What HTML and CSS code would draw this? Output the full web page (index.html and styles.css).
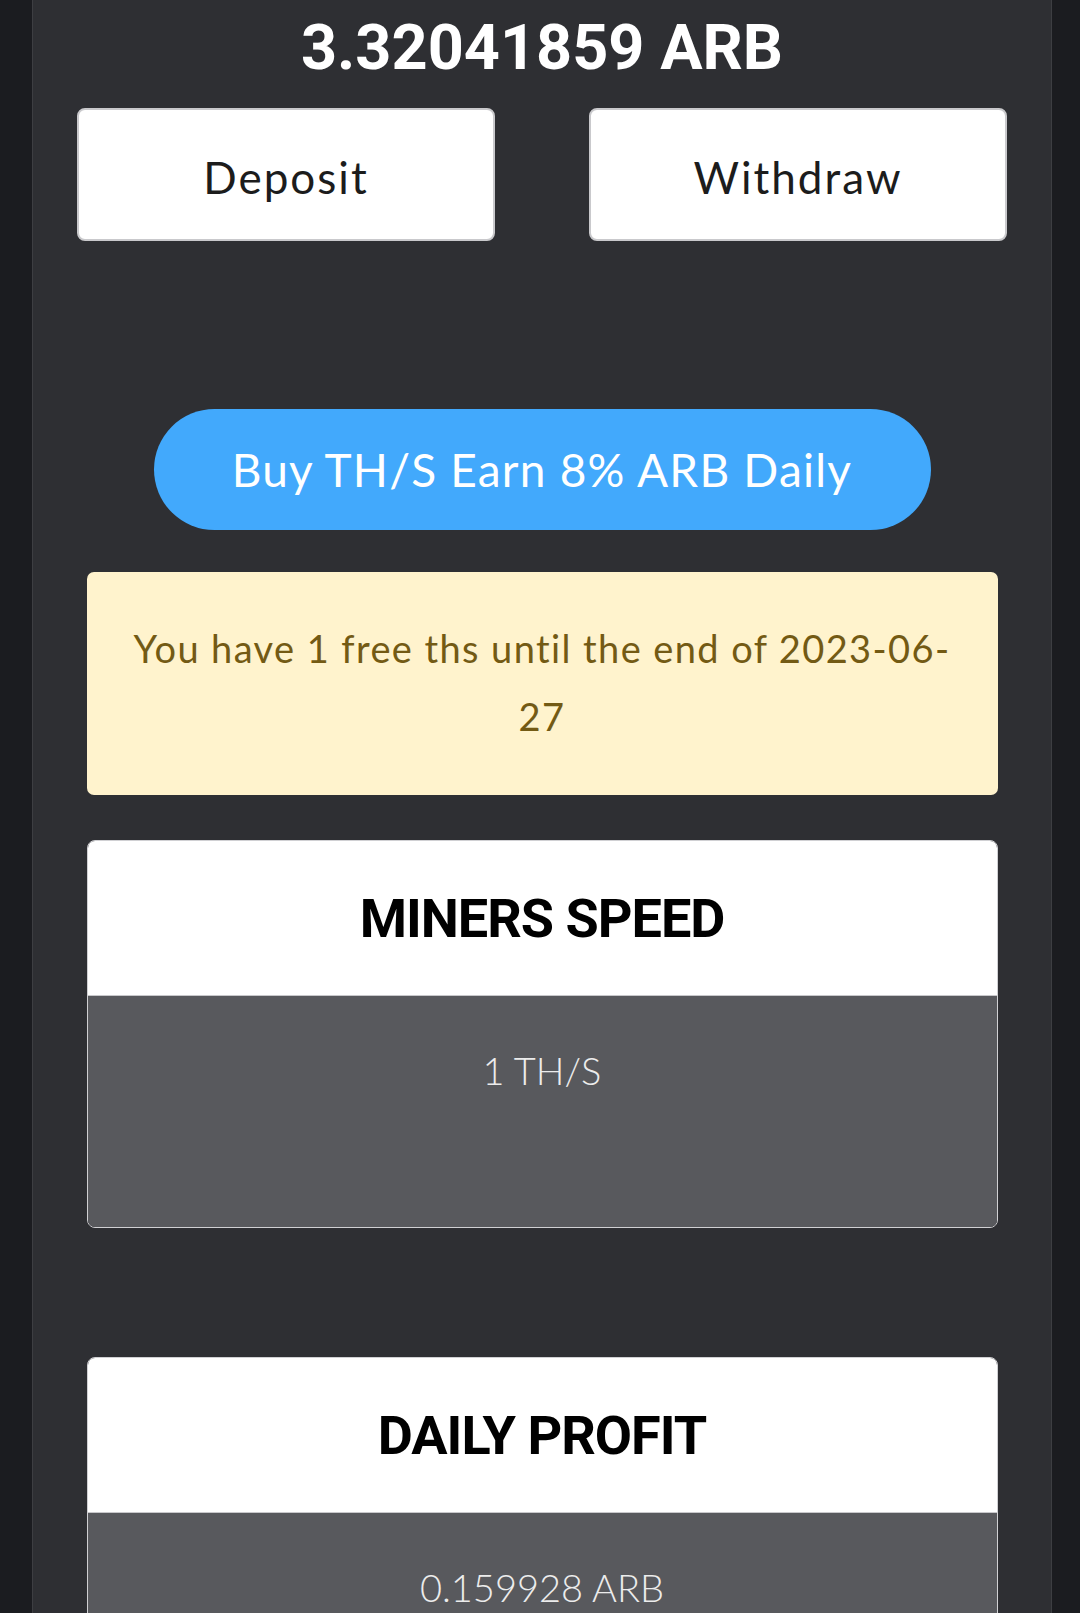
FILE: index.html
```html
<!DOCTYPE html>
<html lang="en">

<head>
  <meta charset="UTF-8" />
  <meta name="viewport" content="width=device-width, initial-scale=1" />
  <title>ARB Miner</title>
  <link rel="stylesheet" href="styles.css">
</head>

<body>
  <div class="panel">
    <!-- Balance -->
    <h1 class="balance">3.32041859 ARB</h1>

    <div class="actions">
      <button type="button" class="action-btn">Deposit</button>
      <button type="button" class="action-btn">Withdraw</button>
    </div>

    <button type="button" class="buy-btn">Buy TH/S Earn 8% ARB Daily</button>

    <div class="alert">
      You have 1 free ths until the end of 2023-06-27
    </div>

    <div class="stat-card">
      <div class="stat-head">MINERS SPEED</div>
      <div class="stat-body">1 TH/S</div>
    </div>

    <div class="stat-card">
      <div class="stat-head">DAILY PROFIT</div>
      <div class="stat-body">0.159928 ARB</div>
    </div>
  </div>
</body>

</html>
```

FILE: styles.css
```css
* {
  margin: 0;
  padding: 0;
  box-sizing: border-box;
}

body {
  background: #1b1c20;
  font-family: "Lato", "Noto Sans", sans-serif;
  color: white;
}

.panel {
  margin-left: 32px;
  width: 1020px;
  min-height: 100vh;
  background: #2e2f33;
  border-left: 1px solid #3d3e42;
  border-right: 1px solid #3d3e42;
  display: flex;
  flex-direction: column;
  align-items: center;
  padding-bottom: 40px;
}

.balance {
  font-family: "Roboto", sans-serif;
  font-weight: 700;
  font-size: 63px;
  line-height: 96px;
  text-align: center;
  color: #ffffff;
}

.actions {
  display: flex;
  gap: 94px;
  margin-top: 12px;
}

.action-btn {
  width: 418px;
  height: 133px;
  padding-top: 4px;
  background: #ffffff;
  border: 2px solid #c9c9cc;
  border-radius: 8px;
  font-family: inherit;
  font-size: 44px;
  color: #1c1c1c;
  letter-spacing: 2px;
}

.buy-btn {
  margin-top: 168px;
  width: 777px;
  height: 121px;
  border: none;
  border-radius: 61px;
  background: #42a9fc;
  color: #ffffff;
  font-family: inherit;
  font-size: 46px;
  letter-spacing: 1.2px;
}

.alert {
  margin-top: 42px;
  width: 911px;
  padding: 42px 38px 45px;
  background: #fff3cd;
  border-radius: 7px;
  color: #735a14;
  font-size: 38px;
  line-height: 68px;
  letter-spacing: 1.4px;
  text-align: center;
}

.stat-card {
  margin-top: 45px;
  width: 911px;
  border: 1px solid #d0d0d3;
  border-radius: 8px;
  overflow: hidden;
}

.stat-card + .stat-card {
  margin-top: 129px;
}

.stat-head {
  height: 155px;
  display: flex;
  align-items: center;
  justify-content: center;
  background: #ffffff;
  border-bottom: 1px solid #c8c8cb;
  color: #000000;
  font-family: "Roboto", sans-serif;
  font-weight: 700;
  font-size: 54px;
  letter-spacing: -1px;
}

.stat-body {
  height: 231px;
  padding-top: 52px;
  background: #58595d;
  color: #ececec;
  font-size: 38px;
  line-height: 44px;
  text-align: center;
  font-weight: 300;
}
```
